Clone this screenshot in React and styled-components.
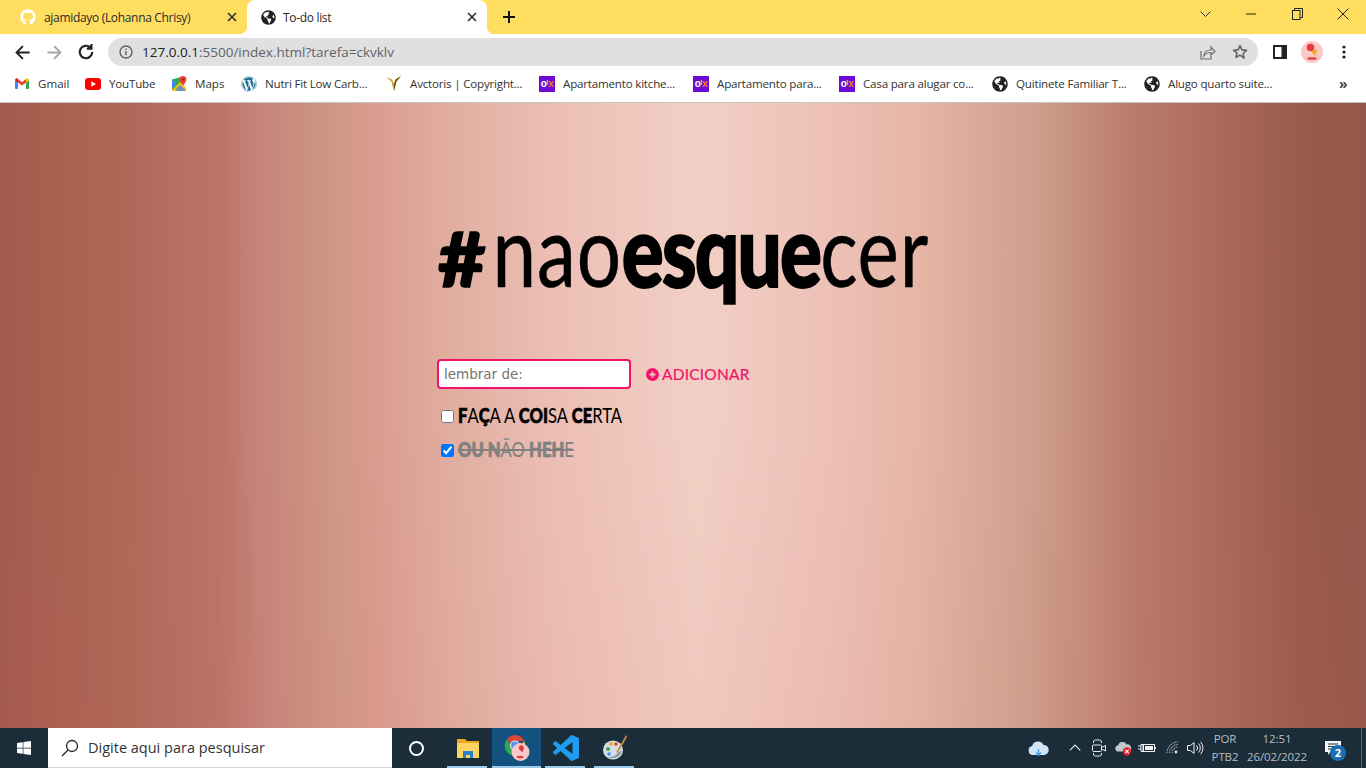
import React from 'react';
import styled, { createGlobalStyle } from 'styled-components';
import { FaGithub, FaGlobeAmericas, FaWordpress, FaWindows } from 'react-icons/fa';

const Global = createGlobalStyle`
  html, body { margin: 0; padding: 0; height: 100%; overflow: hidden; }
  body { font-family: "Open Sans", "Liberation Sans", sans-serif; }
  * { box-sizing: border-box; }
`;

const Screen = styled.div`
  width: 1366px; height: 768px; display: flex; flex-direction: column; overflow: hidden;
`;

/* ---------- tab strip ---------- */
const TabStrip = styled.div`
  height: 34px; flex: none; background: #ffdd5e; display: flex; align-items: stretch;
`;
const Tab = styled.div`
  position: relative; width: ${p => p.$w}px; display: flex; align-items: center;
  padding-left: ${p => p.$pad}px; font-size: 12px; color: #2b2b2b; letter-spacing: -0.32px;
  background: ${p => (p.$active ? '#fff' : 'transparent')};
  border-radius: 8px 8px 0 0;
  ${p => p.$active && `
    &::before, &::after { content: ''; position: absolute; bottom: 0; width: 8px; height: 8px; }
    &::before { left: -8px; background: radial-gradient(circle at 0 0, transparent 8px, #fff 8.5px); }
    &::after { right: -8px; background: radial-gradient(circle at 100% 0, transparent 8px, #fff 8.5px); }
  `}
`;
const TabIcon = styled.span`
  width: 16px; height: 16px; display: flex; align-items: center; justify-content: center;
  color: ${p => p.$color}; font-size: 16px; flex: none; margin-right: ${p => p.$gap}px;
`;
const TabTitle = styled.span`
  flex: 1; white-space: nowrap;
`;
const TabClose = styled.svg`
  width: 10px; height: 10px; flex: none; margin-right: 10px;
`;
const NewTab = styled.svg`
  width: 14px; height: 14px; align-self: center; margin-left: 15px;
`;
const WindowButtons = styled.div`
  margin-left: auto; display: flex; align-items: flex-start; padding-top: 7px;
`;
const WindowButton = styled.div`
  width: 46px; height: 14px; display: flex; align-items: center; justify-content: center;
`;

/* ---------- toolbar ---------- */
const Toolbar = styled.div`
  height: 34px; flex: none; background: #fff; display: flex; align-items: center;
  padding: 2px 0 0 6px;
`;
const NavButton = styled.div`
  width: 32px; height: 28px; display: flex; align-items: center; justify-content: center; flex: none;
`;
const AddressBar = styled.div`
  width: 1150px; height: 28px; margin-left: 6px; margin-right: 6px; border-radius: 14px; background: #e0e0e0;
  display: flex; align-items: center; padding: 0 2px 0 11px; flex: none;
`;
const Url = styled.div`
  font-size: 13.5px; color: #5f6368; margin-left: 9px; flex: 1; white-space: nowrap;
  & b { color: #202124; font-weight: 400; }
`;
const Avatar = styled.div`
  width: 22px; height: 22px; border-radius: 50%; background: #fcc9cb; flex: none; margin: 0 5px;
  display: flex; align-items: center; justify-content: center;
`;

/* ---------- bookmarks ---------- */
const Bookmarks = styled.div`
  height: 35px; flex: none; background: #fff; border-bottom: 1px solid #c4c4c4;
  display: flex; align-items: center; padding: 0 0 3px 14px; gap: 16px;
`;
const Bookmark = styled.div`
  display: flex; align-items: center; gap: 8px; font-size: 11.6px; color: #333; white-space: nowrap;
`;
const BookmarkLabel = styled.span`
  display: block; width: ${p => p.$w}px; letter-spacing: ${p => p.$ls || 0}px;
`;
const BookmarkIcon = styled.span`
  width: 16px; height: 16px; flex: none; display: flex; align-items: center; justify-content: center;
  font-size: 16px; color: ${p => p.$color || '#202124'};
`;
const Olx = styled.span`
  width: 16px; height: 16px; background: #6e0ad6; flex: none; display: flex; align-items: center; justify-content: center;
  font: 700 10px "Liberation Sans", sans-serif; letter-spacing: -0.4px; color: #fff;
  & i { font-style: normal; color: #8ce563; font-size: 8px; margin-bottom: 2px; }
  & u { text-decoration: none; color: #f28000; }
`;
const MoreBookmarks = styled.span`
  margin-left: 48px; font-size: 14px; color: #444; font-weight: 700; line-height: 1;
`;

/* ---------- page ---------- */
const Page = styled.main`
  flex: 1; display: flex; justify-content: center; overflow: hidden;
  background:
    linear-gradient(180deg, rgba(200,90,90,0) 50%, rgba(205,95,95,.06) 100%),
    linear-gradient(90deg,
      #a25a4d 0, #a85f50 45px, #ad6656 113px, #bb7466 218px, #c6847a 261px, #cf9a85 340px, #d89a8c 366px,
      #e2b0a2 462px, #ecbfb6 557px, #f2cfc4 697px, #edc1b8 828px, #e6b6a6 915px, #d0a08e 1028px,
      #b87a6a 1141px, #aa6a59 1220px, #985a4b 1307px, #94584a 1366px);
`;
const Content = styled.div`
  width: 490px; padding-top: 101px; display: flex; flex-direction: column; align-items: flex-start;
`;
const Title = styled.h1`
  margin: 0; font: 400 99px/90px Lato, sans-serif; color: #000; white-space: nowrap; letter-spacing: 1px;
  -webkit-text-stroke: .6px #000;
  transform: scaleX(.79); transform-origin: 0 50%; height: 90px;
`;
const Heavy = styled.span`
  font-weight: 900; -webkit-text-stroke: 2px currentColor; letter-spacing: -2.3px;
`;
const Hash = styled(Heavy)`
  display: inline-block; transform: scale(1.05, .76); transform-origin: 0 83px;
  margin-right: 14px;
`;
const Form = styled.form`
  display: flex; align-items: center; margin: 65px 0 0 -1px;
`;
const TaskInput = styled.input`
  width: 194px; height: 30px; border: 2px solid #f0126b; border-radius: 4px; background: #fff;
  padding: 0 5px; font: 13.5px "DejaVu Sans", sans-serif; color: #222; outline: none;
  &::placeholder { color: #757575; opacity: 1; }
`;
const AddButton = styled.button`
  border: 0; background: none; padding: 0; margin-left: 15px; display: flex; align-items: center; gap: 3px;
  font: 400 15.5px Lato, sans-serif; color: #f0126b; letter-spacing: .2px; -webkit-text-stroke: .2px #f0126b;
`;
const TaskList = styled.ul`
  list-style: none; margin: 13px 0 0; padding: 0; display: flex; flex-direction: column; gap: 6px;
`;
const Task = styled.li`
  display: flex; align-items: center; height: 28px; padding-left: 3px;
  font: 400 21px Lato, sans-serif; white-space: nowrap;
  color: ${p => (p.$done ? '#808080' : '#000')};
`;
const Check = styled.input`
  margin: 0 4px 0 0; width: 13px; height: 13px; flex: none;
`;
const TaskText = styled.span`
  display: inline-block; transform: scaleX(${p => p.$sx}); transform-origin: 0 50%; margin-bottom: 4px;
  text-decoration: ${p => (p.$done ? 'line-through' : 'none')};
`;
const Bold = styled.span`
  font-weight: 900; -webkit-text-stroke: .7px currentColor;
`;

/* ---------- taskbar ---------- */
const Taskbar = styled.footer`
  height: 40px; flex: none; background: #1b2d39; display: flex; align-items: stretch; color: #dfe5e8;
`;
const StartButton = styled.div`
  width: 48px; display: flex; align-items: center; justify-content: center; font-size: 16px; color: #fff;
`;
const SearchBox = styled.div`
  width: 344px; background: #fff; display: flex; align-items: center; padding-left: 13px;
  font: 14.5px "Open Sans", sans-serif; color: #333; gap: 9px; border-bottom: 1px solid #d8d8d8;
`;
const CortanaCell = styled.div`
  width: 51px; padding-right: 2px; display: flex; align-items: center; justify-content: center;
`;
const Ring = styled.span`
  width: 15px; height: 15px; border: 2px solid #fff; border-radius: 50%;
`;
const AppCell = styled.div`
  position: relative; width: 49px; display: flex; align-items: center; justify-content: center;
  background: ${p => (p.$active ? '#13527f' : 'transparent')};
  &::after {
    content: ''; position: absolute; bottom: 0; height: 2px; background: #9ccbe9;
    left: ${p => (p.$active ? 0 : 4)}px; right: ${p => (p.$active ? 0 : 5)}px;
  }
`;
const Tray = styled.div`
  margin-left: auto; display: flex; align-items: center;
`;
const TrayIcon = styled.div`
  width: ${p => p.$w}px; margin-left: ${p => p.$ml || 0}px;
  display: flex; align-items: center; justify-content: center; flex: none;
`;
const TrayText = styled.div`
  width: ${p => p.$w}px; flex: none; text-align: center;
  font: 11.5px/18px "Open Sans", sans-serif; color: #b4bdc2; letter-spacing: -.1px;
  margin-left: ${p => p.$ml || 0}px; margin-top: -1px;
`;
const Badge = styled.span`
  position: absolute; right: -5px; bottom: -5px; width: 16px; height: 16px; border-radius: 50%;
  background: #1a6fb0; color: #fff; font: 700 11px/16px "Open Sans", sans-serif; text-align: center;
`;
const NotifyWrap = styled.div`
  position: relative; display: flex;
`;
const Edge = styled.div`
  width: 1px; height: 40px; background: #54646e; margin-left: 6px; margin-right: 4px;
`;

/* ---------- icons ---------- */
const Stroke = ({ d, size = 16, color = '#202124', w = 2, view = 24 }) => (
  <svg width={size} height={size} viewBox={`0 0 ${view} ${view}`} fill="none" stroke={color} strokeWidth={w}>
    <path d={d} />
  </svg>
);
const CloseIcon = () => (
  <TabClose viewBox="0 0 10 10"><path d="M1 1l8 8M9 1l-8 8" stroke="#333" strokeWidth="1.7" /></TabClose>
);
const GmailIcon = () => (
  <svg width="14" height="11" viewBox="0 0 14 11">
    <path d="M0 2v8a1 1 0 0 0 1 1h2V4.5z" fill="#4285f4" />
    <path d="M14 2v8a1 1 0 0 1-1 1h-2V4.5z" fill="#34a853" />
    <path d="M3 4.7V1L7 4l4-3v3.7L7 7.5z" fill="#ea4335" />
    <path d="M0 2.4C0 .6 2 -.4 3 1v3.8z" fill="#c5221f" />
    <path d="M14 2.4c0-1.8-2-2.8-3-1.4v3.8z" fill="#fbbc04" />
  </svg>
);
const YouTubeIcon = () => (
  <svg width="16" height="12" viewBox="0 0 16 12">
    <rect width="16" height="12" rx="3" fill="#f00" />
    <path d="M6.3 3.3v5.4L11 6z" fill="#fff" />
  </svg>
);
const MapsIcon = () => (
  <svg width="16" height="16" viewBox="0 0 16 16">
    <path d="M1 3.5 10 1v14l-9-1z" fill="#34a853" />
    <path d="M1 14 9 6l6 6v3H2z" fill="#fbbc04" />
    <path d="M1 3.5 5.5 8 1 12.5z" fill="#4285f4" />
    <path d="M5 13l4-4 5 5v1H6z" fill="#4285f4" opacity=".8" />
    <path d="M12 0a3.4 3.4 0 0 0-3.4 3.4C8.6 6 12 9.5 12 9.5s3.4-3.5 3.4-6.1A3.4 3.4 0 0 0 12 0z" fill="#ea4335" />
    <circle cx="12" cy="3.4" r="1.2" fill="#a52714" />
  </svg>
);
const VIcon = () => (
  <svg width="16" height="17" viewBox="0 0 16 17">
    <path d="M0 2 5.500 6.500 8 16l2.500-9.500L15 1 9.500 4.500 8 9 6 4.500z" fill="#d09a1c" />
    <path d="M8 9l1.500-4.500L15 1l-4.500 5.500L8 16z" fill="#7a5510" />
  </svg>
);
const OlxIcon = () => <Olx>o<i>l</i><u>x</u></Olx>;
const AddIcon = () => (
  <svg width="13" height="13" viewBox="0 0 13 13">
    <circle cx="6.500" cy="6.500" r="6.500" fill="#f0126b" />
    <path d="M6.500 3.500v6M3.500 6.500h6" stroke="#f3c4ba" strokeWidth="1.800" />
  </svg>
);
const FolderIcon = () => (
  <svg width="22" height="20" viewBox="0 0 22 20">
    <path d="M0 1h8l2 2h12v4H0z" fill="#e8a922" />
    <path d="M0 5h22v15H0z" fill="#fdd560" />
    <path d="M6 13h10v7h-3v-3H9v3H6z" fill="#2a7fc9" />
  </svg>
);
const ChromeIcon = () => (
  <svg width="26" height="28" viewBox="0 0 26 28">
    <path d="M11 1a10.500 10.500 0 0 1 9.500 6H11a4 4 0 0 0-4 2.500L3 5a10.500 10.500 0 0 1 8-4z" fill="#d9453a" />
    <path d="M3 5l4.500 7.500L11 22A10.500 10.500 0 0 1 3 5z" fill="#35a853" />
    <circle cx="11" cy="11.500" r="4.500" fill="#5a92ea" stroke="#e8eaed" strokeWidth="1.200" />
    <path d="M20.500 7 A10.500 10.500 0 0 1 15 20l-2-4 3-4z" fill="#f4c430" />
    <circle cx="16.500" cy="18" r="9" fill="#f9c8cb" />
    <path d="M16 11.500a3 3 0 0 1 4 2.500l-1.500 4.500-3.500-3.500a3 3 0 0 1 1-3.500z" fill="#e83a3a" />
    <ellipse cx="16" cy="23" rx="3.500" ry="1.300" fill="#e83a3a" />
  </svg>
);
const CodeIcon = () => (
  <svg width="26" height="26" viewBox="0 0 24 24">
    <path fill="#1f9cf0" d="M23.150 2.587L18.210.21a1.494 1.494 0 0 0-1.705.29l-9.460 8.630-4.120-3.128a.999.999 0 0 0-1.276.057L.327 7.261A1 1 0 0 0 .326 8.740L3.899 12 .326 15.260a1 1 0 0 0 .001 1.479L1.650 17.940a.999.999 0 0 0 1.276.057l4.120-3.128 9.460 8.630a1.492 1.492 0 0 0 1.704.290l4.942-2.377A1.500 1.500 0 0 0 24 20.060V3.939a1.500 1.500 0 0 0-.85-1.352zm-5.146 14.861L10.826 12l7.178-5.448v10.896z" />
  </svg>
);
const PaletteIcon = () => (
  <svg width="24" height="26" viewBox="0 0 24 26">
    <ellipse cx="10" cy="15" rx="10" ry="9.500" fill="#d7dfe6" />
    <path d="M5 22c6 3 12 0 14-6l-4 1c-1 4-6 5-10 5z" fill="#8d9aa6" />
    <circle cx="5" cy="14" r="2" fill="#3aa655" />
    <circle cx="8" cy="9" r="2" fill="#e3b341" />
    <circle cx="13" cy="9" r="1.800" fill="#d9453a" />
    <circle cx="6" cy="19" r="1.800" fill="#4285f4" />
    <path d="M23 0l-8 14-2 4 3-2 8-14z" fill="#c68a3e" />
  </svg>
);
const CloudIcon = ({ color = '#cfe6f7' }) => (
  <svg width="21" height="15" viewBox="0 0 21 15">
    <path d="M5 14a4.500 4.500 0 0 1-.8-8.900A6 6 0 0 1 15.500 4 5 5 0 0 1 16 14z" fill={color} />
    <path d="M10.500 8v6M8 11.500l2.500 3 2.500-3" stroke="#4a9fe0" strokeWidth="1.400" fill="none" />
  </svg>
);
const WebcamIcon = () => (
  <svg width="14" height="18" viewBox="0 0 14 18" fill="none" stroke="#e4e8ea" strokeWidth="1">
    <path d="M1.500 4V3a2 2 0 0 1 2-2h4a2 2 0 0 1 2 2v1M1.500 14v1a2 2 0 0 0 2 2h4a2 2 0 0 0 2-2v-1" />
    <rect x=".5" y="6" width="9" height="6.500" rx="1" />
    <path d="M9.500 8.500l4-2v5.500l-4-2" />
  </svg>
);
const OfflineCloud = () => (
  <svg width="17" height="15" viewBox="0 0 17 15">
    <path d="M3.500 10.500a3 3 0 0 1-.4-6A4.500 4.500 0 0 1 11.500 3.500a3.500 3.500 0 0 1 2 7z" fill="#c2c7ca" />
    <circle cx="12" cy="10.500" r="4.200" fill="#e01e2e" />
    <path d="M10.300 8.800l3.400 3.400M13.700 8.800l-3.400 3.400" stroke="#fff" strokeWidth="1.200" />
  </svg>
);
const BatteryIcon = () => (
  <svg width="18" height="12" viewBox="0 0 18 12" fill="none" stroke="#eef1f2">
    <path d="M0 4h3M0 7h3M3 2.500h2v7H3z" strokeWidth="1" />
    <rect x="5.500" y="2.500" width="11" height="7" />
    <rect x="7" y="4" width="8" height="4" fill="#eef1f2" stroke="none" />
    <path d="M17.500 5v2" />
  </svg>
);
const WifiIcon = () => (
  <svg width="14" height="14" viewBox="0 0 14 14" fill="none" stroke="#9aa5ab" strokeWidth="1.100">
    <path d="M1 12a11 11 0 0 1 11-11M3.500 12A8.500 8.500 0 0 1 12 3.500M6 12a6 6 0 0 1 6-6" strokeDasharray="1.500 .8" />
    <circle cx="10" cy="11" r="1.400" fill="#e8ebec" stroke="none" />
  </svg>
);
const VolumeIcon = () => (
  <svg width="17" height="14" viewBox="0 0 17 14" fill="none" stroke="#eef1f2" strokeWidth="1">
    <path d="M.5 4.500h3L7 1.500v11l-3.500-3h-3z" />
    <path d="M9.500 4.500a3.500 3.500 0 0 1 0 5M11.500 2.500a6.500 6.500 0 0 1 0 9M13.500 .8a9 9 0 0 1 0 12.400" />
  </svg>
);
const NotifyIcon = () => (
  <svg width="16" height="15" viewBox="0 0 16 15">
    <path d="M0 0h16v11H5l-2 3v-3H0z" fill="#f5f6f7" />
    <path d="M3 3h10M3 5.500h10M3 8h7" stroke="#1b2d39" strokeWidth="1" />
  </svg>
);

const BOOKMARKS = [
  { icon: <GmailIcon />, label: 'Gmail', w: 31 },
  { icon: <YouTubeIcon />, label: 'YouTube', w: 46, ls: -0.2 },
  { icon: <MapsIcon />, label: 'Maps', w: 30 },
  { icon: <FaWordpress />, color: '#21759b', label: 'Nutri Fit Low Carb...', w: 105, ls: -0.2 },
  { icon: <VIcon />, label: 'Avctoris | Copyright...', w: 113, ls: -0.2 },
  { icon: <OlxIcon />, label: 'Apartamento kitche...', w: 114, ls: -0.2 },
  { icon: <OlxIcon />, label: 'Apartamento para...', w: 106, ls: -0.2 },
  { icon: <OlxIcon />, label: 'Casa para alugar co...', w: 113, ls: -0.2 },
  { icon: <FaGlobeAmericas />, label: 'Quitinete Familiar T...', w: 112, ls: -0.2 },
  { icon: <FaGlobeAmericas />, label: 'Alugo quarto suite...', w: 107, ls: -0.2 },
];

export default function App() {
  return (
    <Screen>
      <Global />
      <TabStrip>
        <Tab $w={247} $pad={20}>
          <TabIcon $color="#fff" $gap={8}><FaGithub /></TabIcon>
          <TabTitle>ajamidayo (Lohanna Chrisy)</TabTitle>
          <CloseIcon />
        </Tab>
        <Tab $w={240} $pad={13} $active>
          <TabIcon $color="#202124" $gap={7}><FaGlobeAmericas size={15} /></TabIcon>
          <TabTitle>To-do list</TabTitle>
          <CloseIcon />
        </Tab>
        <NewTab viewBox="0 0 14 14"><path d="M7 1v12M1 7h12" stroke="#111" strokeWidth="2" /></NewTab>
        <WindowButtons>
          <WindowButton>
            <svg width="11" height="7" viewBox="0 0 11 7"><path d="M.5.5l5 5 5-5" fill="none" stroke="#333" /></svg>
          </WindowButton>
          <WindowButton>
            <svg width="10" height="2" viewBox="0 0 10 2"><path d="M0 1h10" stroke="#222" /></svg>
          </WindowButton>
          <WindowButton>
            <svg width="11" height="12" viewBox="0 0 11 12" fill="none" stroke="#222"><rect x=".5" y="2.5" width="7.5" height="9" /><path d="M2.500 2.500v-2h8v9H8" /></svg>
          </WindowButton>
          <WindowButton>
            <svg width="12" height="12" viewBox="0 0 12 12"><path d="M.5.5l11 11M11.500.5l-11 11" stroke="#222" /></svg>
          </WindowButton>
        </WindowButtons>
      </TabStrip>

      <Toolbar>
        <NavButton><Stroke d="M21 12H5M12.500 4 4.500 12l8 8" size={19} color="#202124" w={2.400} /></NavButton>
        <NavButton><Stroke d="M3 12h16M11.500 4l8 8-8 8" size={19} color="#a6a6a6" w={2.400} /></NavButton>
        <NavButton><Stroke d="M19.500 12a7.500 7.500 0 1 1-2.400-5.500M18.500 2.500v5.500H13" size={20} color="#202124" w={2.600} /></NavButton>
        <AddressBar>
          <svg width="14" height="14" viewBox="0 0 14 14" fill="none" stroke="#5f6368" strokeWidth="1.400">
            <circle cx="7" cy="7" r="6" /><path d="M7 6v4.200M7 3.600v1.300" />
          </svg>
          <Url><b>127.0.0.1</b>:5500/index.html?tarefa=ckvklv</Url>
          <NavButton>
            <svg width="16" height="15" viewBox="0 0 16 15" fill="none" stroke="#6a6e72" strokeWidth="1.200">
              <path d="M1 6v8h10v-3" /><path d="M4 11c0-4 3-6 7-6V2l4 4.500L11 10V7.500C8 7.500 5.500 8.500 4 11z" />
            </svg>
          </NavButton>
          <NavButton>
            <svg width="16" height="16" viewBox="0 0 24 24" fill="none" stroke="#5f6368" strokeWidth="2.400" strokeLinejoin="round">
              <path d="M12 2.500l2.900 6.300 6.900.8-5.100 4.700 1.400 6.800L12 16.700l-6.100 3.400 1.400-6.800L2.200 9.600l6.900-.8z" />
            </svg>
          </NavButton>
        </AddressBar>
        <NavButton>
          <svg width="14" height="14" viewBox="0 0 14 14"><path d="M0 0h14v14H0z" fill="#202124" /><path d="M2 2h6.500v10H2z" fill="#fff" /></svg>
        </NavButton>
        <Avatar>
          <svg width="16" height="18" viewBox="0 0 16 18">
            <path d="M7 8l6.500-2-2.500 7z" fill="#f5a623" />
            <circle cx="6.500" cy="4.500" r="3.800" fill="#e83a3a" />
            <ellipse cx="8" cy="15.500" rx="5" ry="1.300" fill="#e83a3a" />
          </svg>
        </Avatar>
        <NavButton>
          <svg width="4" height="14" viewBox="0 0 4 14" fill="#202124"><circle cx="2" cy="2" r="1.600" /><circle cx="2" cy="7" r="1.600" /><circle cx="2" cy="12" r="1.600" /></svg>
        </NavButton>
      </Toolbar>

      <Bookmarks>
        {BOOKMARKS.map(b => (
          <Bookmark key={b.label}>
            <BookmarkIcon $color={b.color}>{b.icon}</BookmarkIcon>
            <BookmarkLabel $w={b.w} $ls={b.ls}>{b.label}</BookmarkLabel>
          </Bookmark>
        ))}
        <MoreBookmarks>»</MoreBookmarks>
      </Bookmarks>

      <Page>
        <Content>
          <Title><Hash>#</Hash>nao<Heavy>esque</Heavy>cer</Title>
          <Form onSubmit={e => e.preventDefault()}>
            <TaskInput placeholder="lembrar de:" />
            <AddButton type="button"><AddIcon />ADICIONAR</AddButton>
          </Form>
          <TaskList>
            <Task>
              <Check type="checkbox" />
              <TaskText $sx={0.79}><Bold>F</Bold>A<Bold>Ç</Bold>A A <Bold>COI</Bold>SA <Bold>CE</Bold>RTA</TaskText>
            </Task>
            <Task $done>
              <Check type="checkbox" defaultChecked />
              <TaskText $sx={0.79} $done><Bold>OU N</Bold>ÃO <Bold>HEH</Bold>E</TaskText>
            </Task>
          </TaskList>
        </Content>
      </Page>

      <Taskbar>
        <StartButton><FaWindows /></StartButton>
        <SearchBox>
          <svg width="18" height="18" viewBox="0 0 18 18" fill="none" stroke="#222" strokeWidth="1.300">
            <circle cx="11" cy="7" r="5.500" /><path d="M7 11l-6 6" />
          </svg>
          Digite aqui para pesquisar
        </SearchBox>
        <CortanaCell><Ring /></CortanaCell>
        <AppCell><FolderIcon /></AppCell>
        <AppCell $active><ChromeIcon /></AppCell>
        <AppCell><CodeIcon /></AppCell>
        <AppCell><PaletteIcon /></AppCell>
        <Tray>
          <TrayIcon $w={24}><CloudIcon /></TrayIcon>
          <TrayIcon $w={24} $ml={13}><Stroke d="M3 16l9-9 9 9" size={14} color="#e4e8ea" w={2} /></TrayIcon>
          <TrayIcon $w={24}><WebcamIcon /></TrayIcon>
          <TrayIcon $w={24}><OfflineCloud /></TrayIcon>
          <TrayIcon $w={24}><BatteryIcon /></TrayIcon>
          <TrayIcon $w={24} $ml={2}><WifiIcon /></TrayIcon>
          <TrayIcon $w={20}><VolumeIcon /></TrayIcon>
          <TrayText $w={36} $ml={2}>POR<br />PTB2</TrayText>
          <TrayText $w={68}>12:51<br />26/02/2022</TrayText>
          <TrayIcon $w={44}>
            <NotifyWrap><NotifyIcon /><Badge>2</Badge></NotifyWrap>
          </TrayIcon>
          <Edge />
        </Tray>
      </Taskbar>
    </Screen>
  );
}
